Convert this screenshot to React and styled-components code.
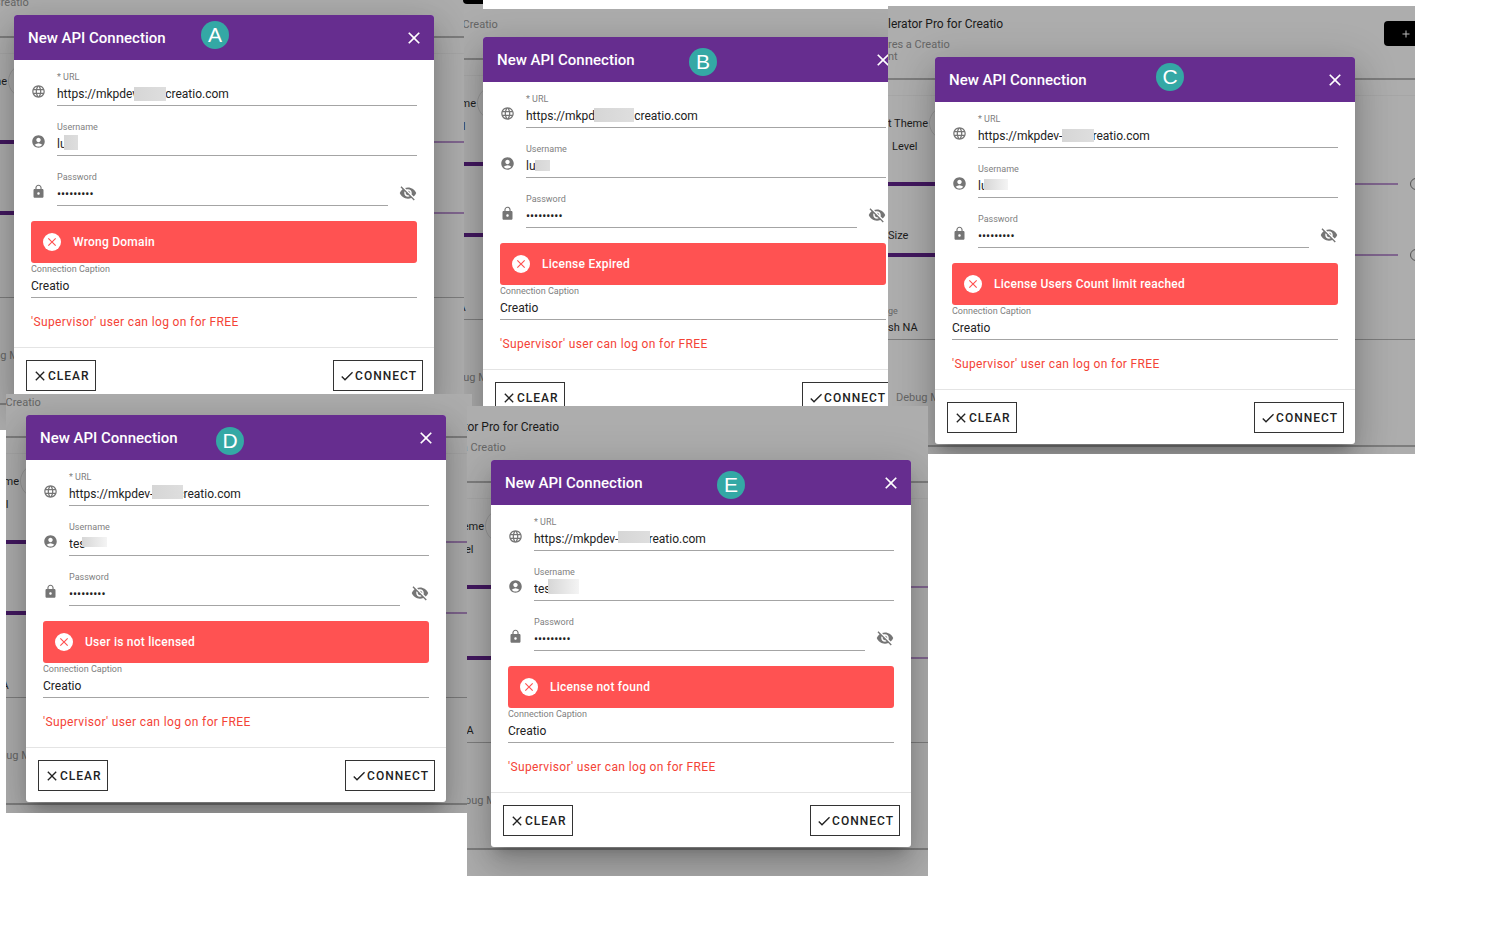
import styled, { createGlobalStyle } from "styled-components";
import {
  MdAccountCircle,
  MdAdd,
  MdCheck,
  MdClose,
  MdLanguage,
  MdLock,
  MdVisibilityOff,
} from "react-icons/md";

const URL_VALUE = "https://mkpdev-" + "\u00a0".repeat(8) + "creatio.com";

/* shot: where the capture sits on the board, page: offset of the page inside it */
const shots = [
  {
    id: "a",
    letter: "A",
    message: "Wrong Domain",
    user: "lu",
    shot: { left: 0, top: 0, width: 483, height: 430 },
    page: { left: -33, top: -36 },
    badge: { left: 187, top: 6 },
    urlMask: { left: 77, top: 4, width: 32, height: 14 },
    userMask: { left: 7, top: 2, width: 14, height: 15 },
  },
  {
    id: "b",
    letter: "B",
    message: "License Expired",
    user: "lu",
    shot: { left: 464, top: 9, width: 424, height: 397 },
    page: { left: -28, top: -23 },
    badge: { left: 206, top: 11 },
    urlMask: { left: 68, top: 3, width: 40, height: 14 },
    userMask: { left: 9, top: 5, width: 15, height: 11 },
  },
  {
    id: "c",
    letter: "C",
    message: "License Users Count limit reached",
    user: "lu",
    shot: { left: 888, top: 6, width: 527, height: 448 },
    page: { left: 0, top: 0 },
    badge: { left: 221, top: 6 },
    urlMask: { left: 84, top: 4, width: 32, height: 13 },
    userMask: { left: 6, top: 4, width: 24, height: 11, fade: true },
  },
  {
    id: "d",
    letter: "D",
    message: "User is not licensed",
    user: "tes",
    shot: { left: 6, top: 394, width: 466, height: 419 },
    page: { left: -27, top: -30 },
    badge: { left: 190, top: 12 },
    urlMask: { left: 83, top: 2, width: 31, height: 14 },
    userMask: { left: 13, top: 4, width: 25, height: 10, fade: true },
  },
  {
    id: "e",
    letter: "E",
    message: "License not found",
    user: "tes",
    shot: { left: 467, top: 406, width: 461, height: 470 },
    page: { left: -23, top: 3 },
    badge: { left: 226, top: 11 },
    urlMask: { left: 84, top: 3, width: 32, height: 12 },
    userMask: { left: 14, top: 1, width: 31, height: 15, fade: true },
  },
];

const SettingsPage = ({ id }) => (
  <>
    <PageHeader>
      <div>
        <PageTitle>lerator Pro for Creatio</PageTitle>
        <PageNote>
          res a Creatio
          <br />
          nt
        </PageNote>
      </div>
      <AddButton type="button" aria-label="Add">
        <MdAdd />
      </AddButton>
    </PageHeader>
    <PageSubBar />
    <ThemeRow>
      t Theme <ThemeKnob />
    </ThemeRow>
    <SettingLabel htmlFor={`${id}-level`}>Level</SettingLabel>
    <SliderRow $spaced>
      <Slider id={`${id}-level`} type="range" defaultValue="50" />
      <Ring />
    </SliderRow>
    <SettingLabel htmlFor={`${id}-size`} $size>
      Size
    </SettingLabel>
    <SliderRow>
      <Slider id={`${id}-size`} type="range" defaultValue="50" />
      <Ring />
    </SliderRow>
    <LanguageBlock>
      <small>ge</small>
      <span>sh NA</span>
    </LanguageBlock>
    <DebugRow>Debug M</DebugRow>
  </>
);

const Field = ({ id, label, icon, type = "text", value, mask, children }) => (
  <FieldRow>
    {icon && <FieldIcon>{icon}</FieldIcon>}
    <FieldBox>
      <FieldLabel htmlFor={id}>{label}</FieldLabel>
      <ValueBox>
        <FieldInput id={id} type={type} defaultValue={value} />
        {mask && <Mask $area={mask} />}
      </ValueBox>
    </FieldBox>
    {children}
  </FieldRow>
);

const ConnectionDialog = ({ id, letter, message, user, badge, urlMask, userMask }) => (
  <Dialog role="dialog" aria-labelledby={`${id}-title`}>
    <DialogHeader>
      <DialogTitle id={`${id}-title`}>New API Connection</DialogTitle>
      <CloseButton type="button" aria-label="Close">
        <MdClose />
      </CloseButton>
      <Badge $left={badge.left} $top={badge.top}>
        {letter}
      </Badge>
    </DialogHeader>
    <DialogBody>
      <Fields>
        <Field
          id={`${id}-url`}
          label="* URL"
          icon={<MdLanguage />}
          value={URL_VALUE}
          mask={urlMask}
        />
        <Field
          id={`${id}-user`}
          label="Username"
          icon={<MdAccountCircle />}
          value={user}
          mask={userMask}
        />
        <Field
          id={`${id}-password`}
          label="Password"
          icon={<MdLock />}
          type="password"
          value="password1"
        >
          <EyeButton type="button" aria-label="Show password">
            <MdVisibilityOff />
          </EyeButton>
        </Field>
      </Fields>
      <Alert role="alert">
        <AlertIcon>
          <MdClose />
        </AlertIcon>
        {message}
      </Alert>
      <Field id={`${id}-caption`} label="Connection Caption" value="Creatio" />
      <Hint>'Supervisor' user can log on for FREE</Hint>
    </DialogBody>
    <DialogFooter>
      <ActionButton type="button">
        <MdClose />
        CLEAR
      </ActionButton>
      <ActionButton type="button">
        <MdCheck />
        CONNECT
      </ActionButton>
    </DialogFooter>
  </Dialog>
);

const App = () => (
  <>
    <GlobalStyle />
    <Board>
      {shots.map(({ shot, page, ...dialog }) => (
        <Shot key={dialog.id} $area={shot}>
          <Page $left={page.left} $top={page.top}>
            <SettingsPage id={dialog.id} />
            <ConnectionDialog {...dialog} />
          </Page>
        </Shot>
      ))}
    </Board>
  </>
);

export default App;

const GlobalStyle = createGlobalStyle`
  * {
    box-sizing: border-box;
  }

  body {
    margin: 0;
    background: #fff;
    font-family: Roboto, "Liberation Sans", sans-serif;
  }

  button,
  input {
    font-family: inherit;
  }
`;

const Board = styled.main`
  position: relative;
  width: 100%;
  min-height: 100vh;
  overflow: hidden;
`;

const Shot = styled.section`
  position: absolute;
  left: ${(props) => props.$area.left}px;
  top: ${(props) => props.$area.top}px;
  width: ${(props) => props.$area.width}px;
  height: ${(props) => props.$area.height}px;
  overflow: hidden;
  background: #adadad;
`;

const Page = styled.div`
  position: absolute;
  left: ${(props) => props.$left}px;
  top: ${(props) => props.$top}px;
  width: 560px;
  color: #1c1c1c;
  font-size: 11px;
`;

const PageHeader = styled.div`
  display: flex;
  height: 74px;
  padding-top: 8px;
  border-bottom: 2px solid #7d7d7d;
`;

const PageTitle = styled.div`
  width: 496px;
  font-size: 12px;
  line-height: 20px;
  color: #1a1a1a;
`;

const PageNote = styled.div`
  margin-top: 5px;
  line-height: 12px;
  color: #666;
`;

const AddButton = styled.button`
  display: flex;
  align-items: center;
  justify-content: center;
  width: 44px;
  height: 25px;
  margin-top: 7px;
  padding: 0;
  border: 0;
  border-radius: 4px;
  background: #000;
  color: #bbb;
  font-size: 12px;
`;

const PageSubBar = styled.div`
  height: 16px;
  border-bottom: 1px solid #a6a6a6;
`;

const ThemeRow = styled.div`
  display: flex;
  align-items: center;
  height: 54px;
`;

const ThemeKnob = styled.span`
  width: 34px;
  height: 34px;
  margin-left: 1px;
  border: 1px solid #999;
  border-radius: 50%;
`;

const SettingLabel = styled.label`
  display: block;
  padding-left: ${(props) => (props.$size ? 0 : 4)}px;
  line-height: 20px;
  margin-top: ${(props) => (props.$size ? 33 : -13)}px;
`;

const SliderRow = styled.div`
  display: flex;
  align-items: center;
  gap: 12px;
  height: 18px;
  margin-top: ${(props) => (props.$spaced ? 18 : 0)}px;
`;

const Slider = styled.input`
  appearance: none;
  flex: none;
  width: 510px;
  height: 4px;
  margin: 0;
  background:
    linear-gradient(#42185f, #42185f) left center / 50% 4px no-repeat,
    linear-gradient(#80668f, #80668f) right center / 50% 2px no-repeat;

  &::-webkit-slider-thumb {
    appearance: none;
    width: 12px;
    height: 12px;
    border-radius: 50%;
    background: #42185f;
  }
`;

const Ring = styled.span`
  width: 12px;
  height: 12px;
  border: 1px solid #555;
  border-radius: 50%;
`;

const LanguageBlock = styled.div`
  display: flex;
  flex-direction: column;
  height: 76px;
  padding-top: 41px;
  border-bottom: 1px solid #7d7d7d;

  small {
    font-size: 9px;
    line-height: 12px;
    color: #666;
  }

  span {
    line-height: 22px;
  }
`;

const DebugRow = styled.div`
  height: 107px;
  padding: 48px 0 0 8px;
  border-bottom: 2px solid #7d7d7d;
  line-height: 20px;
  color: #666;
`;

const Dialog = styled.div`
  position: absolute;
  left: 47px;
  top: 51px;
  display: flex;
  flex-direction: column;
  width: 420px;
  border-radius: 3px;
  overflow: hidden;
  background: #fff;
  box-shadow:
    0 10px 13px -6px rgba(0, 0, 0, 0.2),
    0 20px 33px 3px rgba(0, 0, 0, 0.14),
    0 8px 40px 7px rgba(0, 0, 0, 0.12);
`;

const DialogHeader = styled.header`
  position: relative;
  display: flex;
  align-items: center;
  justify-content: space-between;
  height: 45px;
  padding: 0 10px 0 14px;
  background: #662d8f;
  color: #fff;
`;

const DialogTitle = styled.h2`
  margin: 0;
  font-size: 15px;
  font-weight: 500;
`;

const CloseButton = styled.button`
  display: flex;
  padding: 0;
  border: 0;
  background: none;
  color: #fff;
  font-size: 20px;
`;

const Badge = styled.span`
  position: absolute;
  left: ${(props) => props.$left}px;
  top: ${(props) => props.$top}px;
  width: 28px;
  height: 28px;
  border-radius: 50%;
  background: #34a8a5;
  font-family: "Liberation Sans", sans-serif;
  font-size: 21px;
  line-height: 28px;
  text-align: center;
`;

const DialogBody = styled.div`
  padding: 11px 17px 15px;
`;

const Fields = styled.div`
  display: flex;
  flex-direction: column;
  gap: 15px;
`;

const FieldRow = styled.div`
  display: flex;
  align-items: center;
`;

const FieldIcon = styled.span`
  display: flex;
  width: 26px;
  margin-top: 6px;
  color: #757575;
  font-size: 15px;
`;

const FieldBox = styled.div`
  flex: 1;
  display: flex;
  flex-direction: column;
`;

const FieldLabel = styled.label`
  font-size: 9px;
  line-height: 12px;
  color: #808080;
`;

const ValueBox = styled.div`
  position: relative;
  display: flex;
  height: 23px;
  border-bottom: 1px solid #a4a4a4;
`;

const FieldInput = styled.input`
  flex: 1;
  min-width: 0;
  height: 21px;
  padding: 0;
  border: 0;
  outline: 0;
  background: none;
  color: #222;
  font-size: 12px;
`;

const Mask = styled.span`
  position: absolute;
  left: ${(props) => props.$area.left}px;
  top: ${(props) => props.$area.top}px;
  width: ${(props) => props.$area.width}px;
  height: ${(props) => props.$area.height}px;
  background: linear-gradient(
    to right,
    #d6d6d6,
    ${(props) => (props.$area.fade ? "#f4f4f4" : "#dedede")}
  );
`;

const EyeButton = styled.button`
  display: flex;
  margin: 8px 0 0 11px;
  padding: 0;
  border: 0;
  background: none;
  color: #757575;
  font-size: 18px;
`;

const Alert = styled.div`
  display: flex;
  align-items: center;
  gap: 12px;
  height: 42px;
  margin-top: 15px;
  padding: 0 12px;
  border-radius: 3px;
  background: #ff5252;
  color: #fff;
  font-size: 12px;
  font-weight: 500;
  letter-spacing: 0.02em;
`;

const AlertIcon = styled.span`
  display: flex;
  align-items: center;
  justify-content: center;
  width: 18px;
  height: 18px;
  border-radius: 50%;
  background: #fff;
  color: #ff5252;
  font-size: 14px;
`;

const Hint = styled.p`
  margin: 14px 0 0;
  color: #f44336;
  font-size: 12px;
  line-height: 20px;
  letter-spacing: 0.03em;
`;

const DialogFooter = styled.footer`
  display: flex;
  justify-content: space-between;
  padding: 12px 11px 11px 12px;
  border-top: 1px solid #e4e4e4;
`;

const ActionButton = styled.button`
  display: flex;
  align-items: center;
  height: 31px;
  padding: 0 5px;
  border: 1px solid #333;
  background: #fff;
  color: #222;
  font-size: 12px;
  font-weight: 500;
  letter-spacing: 1px;

  svg {
    font-size: 16px;
  }
`;
